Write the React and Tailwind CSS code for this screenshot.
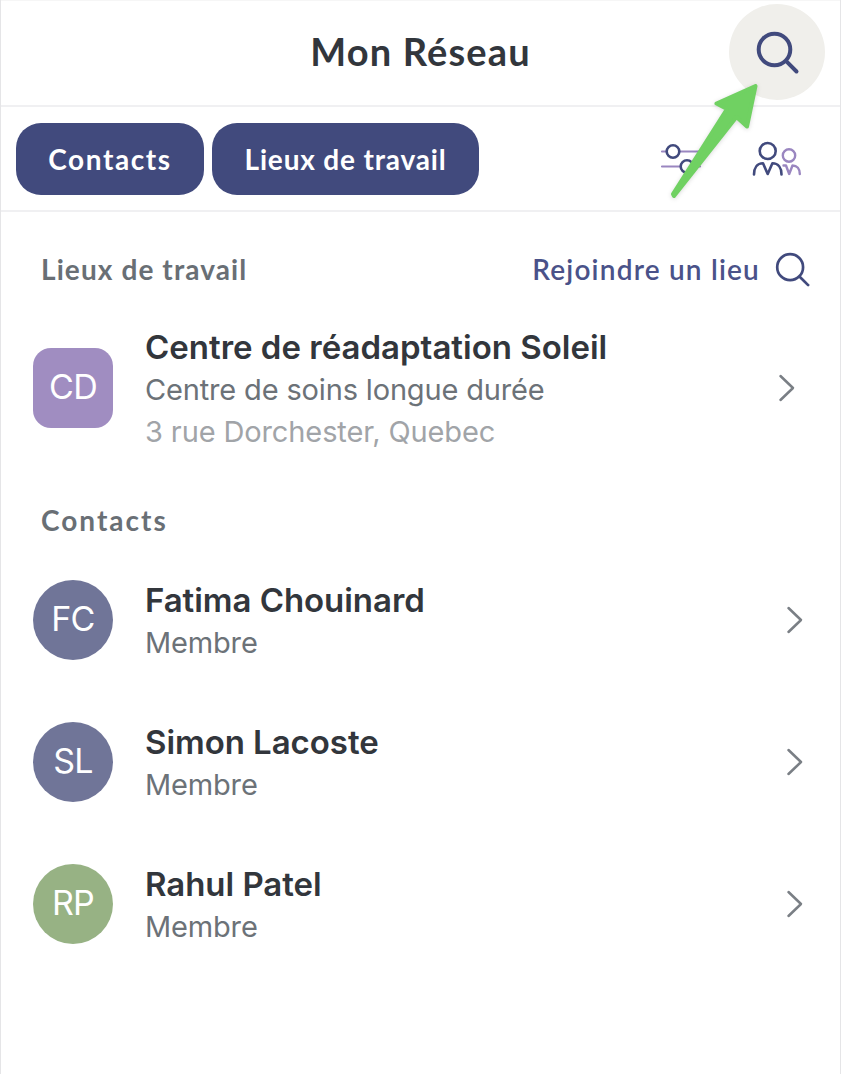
const contacts = [
  { initials: "FC", name: "Fatima Chouinard", role: "Membre", color: "bg-[#707598]" },
  { initials: "SL", name: "Simon Lacoste", role: "Membre", color: "bg-[#707598]" },
  { initials: "RP", name: "Rahul Patel", role: "Membre", color: "bg-[#97b284]" },
];

function SearchIcon({ className, strokeWidth }) {
  return (
    <svg viewBox="0 0 44 44" fill="none" stroke="#414a7d" strokeWidth={strokeWidth} strokeLinecap="round" className={className}>
      <circle cx="18.5" cy="18.5" r="15.800" />
      <path d="M30.2 30.2 40.500 40.5" />
    </svg>
  );
}

function Chevron() {
  return (
    <svg viewBox="0 0 18 30" fill="none" stroke="#7a7f85" strokeWidth="2.5" strokeLinecap="round" strokeLinejoin="round" className="h-[30px] w-[18px] shrink-0">
      <path d="M2.5 3 15 15 2.5 27" />
    </svg>
  );
}

function SlidersIcon() {
  return (
    <svg viewBox="0 0 42 32" fill="none" strokeWidth="2.2" strokeLinecap="round" className="h-8 w-[42px]">
      <path d="M2 8.500h38M2 23.500h38" stroke="#9a86c0" />
      <circle cx="13" cy="8.500" r="6.3" fill="#fff" stroke="#414a7d" strokeWidth="2.6" />
      <circle cx="27" cy="23.500" r="6.3" fill="#fff" stroke="#414a7d" strokeWidth="2.6" />
    </svg>
  );
}

function PeopleIcon() {
  return (
    <svg viewBox="0 0 50 36" fill="none" strokeLinecap="round" strokeLinejoin="round" className="h-9 w-[50px]">
      <g stroke="#414a7d" strokeWidth="2.6">
        <circle cx="15.7" cy="10" r="8" />
        <path d="M2 33.500C2 27 5 22.300 11 22.300L15.700 33 20.400 22.300C26.500 22.300 29.500 27 29.500 33.500" />
      </g>
      <g stroke="#9a86c0" strokeWidth="2.400">
        <circle cx="37" cy="14.500" r="6.200" />
        <path d="M31.500 24.500H34L37.200 33 40.500 24.500C45 24.500 47.800 28 47.800 33" />
      </g>
    </svg>
  );
}

function Contact({ contact }) {
  return (
    <li className="flex h-[142px] items-center pr-[36px] pl-8">
      <div className={`flex size-20 shrink-0 items-center justify-center rounded-full pb-[3px] text-[34px] text-white ${contact.color}`}>
        <span className="tracking-[-0.8px]">{contact.initials}</span>
      </div>
      <div className="ml-8 flex-1 pt-[3px]">
        <p className="h-[43px] text-[33px] leading-[42px] font-semibold tracking-[-0.05px] text-[#32363c]">{contact.name}</p>
        <p className="text-[29px] leading-[42px] tracking-[-0.16px] text-[#6c7278]">{contact.role}</p>
      </div>
      <Chevron />
    </li>
  );
}

export default function App() {
  return (
    <div className="flex h-[1074px] w-[841px] flex-col overflow-hidden border-x border-[#e5e5e7] bg-white font-['Inter',sans-serif] whitespace-nowrap">
      <header className="relative flex h-[107px] shrink-0 items-center justify-center border-t border-b-2 border-t-[#f6f6f6] border-b-[#f0f0f2] pb-1">
        <h1 className="font-['Lato',sans-serif] text-[38px] leading-none font-bold tracking-[1.150px] text-[#32363c]">Mon Réseau</h1>
        <button className="absolute top-[3px] right-[15px] flex size-24 items-center justify-center rounded-full bg-[#f0efeb]" aria-label="Rechercher">
          <SearchIcon className="mt-0.5 ml-px size-11" strokeWidth={4} />
        </button>
      </header>

      <nav className="flex h-[105px] shrink-0 items-center justify-between border-b-2 border-[#f0f0f2] pr-[38px] pl-[15px]">
        <div className="flex gap-2 font-['Lato',sans-serif] text-[28px] font-bold text-white">
          <button className="h-[72px] w-[188px] rounded-[25px] bg-[#414a7d] tracking-[1.600px]">Contacts</button>
          <button className="h-[72px] w-[267px] rounded-[25px] bg-[#414a7d] tracking-[0.820px]">Lieux de travail</button>
        </div>
        <div className="relative flex items-center gap-[50px]">
          <SlidersIcon />
          <PeopleIcon />
          <svg viewBox="0 0 92 120" className="pointer-events-none absolute -top-[60px] left-[8px] h-[120px] w-[92px] drop-shadow-sm" fill="#70d162" stroke="#70d162" strokeWidth="4" strokeLinejoin="round">
            <path d="M87.500 5 79 45.500 68.500 36 6 115 5 113 59 28 48.500 22.500Z" />
          </svg>
        </div>
      </nav>

      <main>
        <div className="flex h-[116px] items-center justify-between pr-[29px] pl-10 font-['Lato',sans-serif]">
          <h2 className="pb-[3px] text-[28px] font-bold tracking-[1.100px] text-[#696f75]">Lieux de travail</h2>
          <button className="flex items-center gap-[15px] text-[28px] font-semibold tracking-[1.200px] text-[#4a5289]">
            <span className="pb-[3px]">Rejoindre un lieu</span>
            <SearchIcon className="size-9" strokeWidth={3.3} />
          </button>
        </div>

        <div className="flex h-[120px] items-center pr-[44px] pl-8">
          <div className="flex size-20 shrink-0 items-center justify-center rounded-[18px] bg-[#a08dc1] pb-[3px] text-[34px] text-white">
            <span className="tracking-[-0.8px]">CD</span>
          </div>
          <div className="ml-8 flex-1 pt-[3px]">
            <p className="h-[43px] text-[33px] leading-[42px] font-semibold text-[#32363c]">Centre de réadaptation Soleil</p>
            <p className="text-[29px] leading-[42px] tracking-[-0.160px] text-[#6c7278]">Centre de soins longue durée</p>
            <p className="text-[29px] leading-[42px] tracking-[-0.120px] text-[#a1a4a8]">3 rue Dorchester, Quebec</p>
          </div>
          <Chevron />
        </div>

        <div className="flex h-[101px] items-end pb-2 pl-10">
          <h2 className="font-['Lato',sans-serif] text-[28px] font-bold tracking-[2px] text-[#696f75]">Contacts</h2>
        </div>

        <ul>
          {contacts.map((contact) => (
            <Contact key={contact.initials} contact={contact} />
          ))}
        </ul>
      </main>
    </div>
  );
}
